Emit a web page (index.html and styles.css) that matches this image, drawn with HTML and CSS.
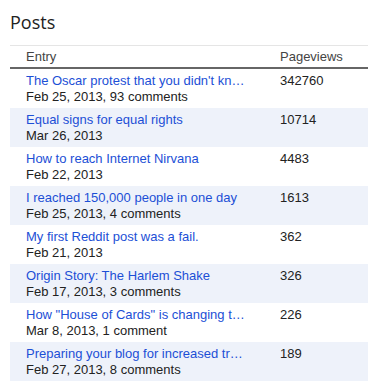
FILE: index.html
```html
<!DOCTYPE html>
<html>
<head>
<meta charset="utf-8">
<link rel="stylesheet" href="styles.css">
</head>
<body>
<div class="panel">
  <h2 class="title">Posts</h2>
  <div class="table">
    <div class="row head">
      <div class="cell entry">Entry</div>
      <div class="cell views">Pageviews</div>
    </div>
    <div class="row">
      <div class="cell entry"><a class="link">The Oscar protest that you didn't know about</a><span class="meta">Feb 25, 2013, 93 comments</span></div>
      <div class="cell views">342760</div>
    </div>
    <div class="row alt">
      <div class="cell entry"><a class="link">Equal signs for equal rights</a><span class="meta">Mar 26, 2013</span></div>
      <div class="cell views">10714</div>
    </div>
    <div class="row">
      <div class="cell entry"><a class="link">How to reach Internet Nirvana</a><span class="meta">Feb 22, 2013</span></div>
      <div class="cell views">4483</div>
    </div>
    <div class="row alt">
      <div class="cell entry"><a class="link">I reached 150,000 people in one day</a><span class="meta">Feb 25, 2013, 4 comments</span></div>
      <div class="cell views">1613</div>
    </div>
    <div class="row">
      <div class="cell entry"><a class="link">My first Reddit post was a fail.</a><span class="meta">Feb 21, 2013</span></div>
      <div class="cell views">362</div>
    </div>
    <div class="row alt">
      <div class="cell entry"><a class="link">Origin Story: The Harlem Shake</a><span class="meta">Feb 17, 2013, 3 comments</span></div>
      <div class="cell views">326</div>
    </div>
    <div class="row">
      <div class="cell entry"><a class="link">How "House of Cards" is changing the way we watch TV</a><span class="meta">Mar 8, 2013, 1 comment</span></div>
      <div class="cell views">226</div>
    </div>
    <div class="row alt">
      <div class="cell entry"><a class="link">Preparing your blog for increased traffic</a><span class="meta">Feb 27, 2013, 8 comments</span></div>
      <div class="cell views">189</div>
    </div>
  </div>
</div>
</body>
</html>
```
FILE: styles.css
```css
html, body {
  margin: 0;
  padding: 0;
  background: #fff;
}
.panel {
  padding: 10px 0 0 10px;
  font-family: "Liberation Sans", Arial, sans-serif;
  font-size: 13px;
  color: #222;
}
.title {
  margin: 0;
  font-family: "Open Sans", sans-serif;
  font-weight: normal;
  font-size: 18px;
  line-height: 25px;
  color: #222;
}
.table {
  margin-top: 10px;
  border-top: 1px solid #e5e5e5;
}
.row {
  display: grid;
  grid-template-columns: 270px 1fr;
  height: 39px;
  align-items: center;
}
.row.alt {
  background: #eef2fa;
}
.row.head {
  height: 21px;
  border-bottom: 2px solid #666;
  color: #444;
}
.cell {
  line-height: 16px;
  min-width: 0;
}
.entry {
  padding: 0 33px 0 16px;
  display: flex;
  flex-direction: column;
}
.head .entry {
  display: block;
}
.link {
  color: #1c4fd6;
  text-decoration: none;
  white-space: nowrap;
  overflow: hidden;
  text-overflow: ellipsis;
}
.meta {
  white-space: nowrap;
}
.views {
  align-self: start;
  padding-top: 4px;
}
.head .views {
  align-self: center;
  padding-top: 0;
}
```
